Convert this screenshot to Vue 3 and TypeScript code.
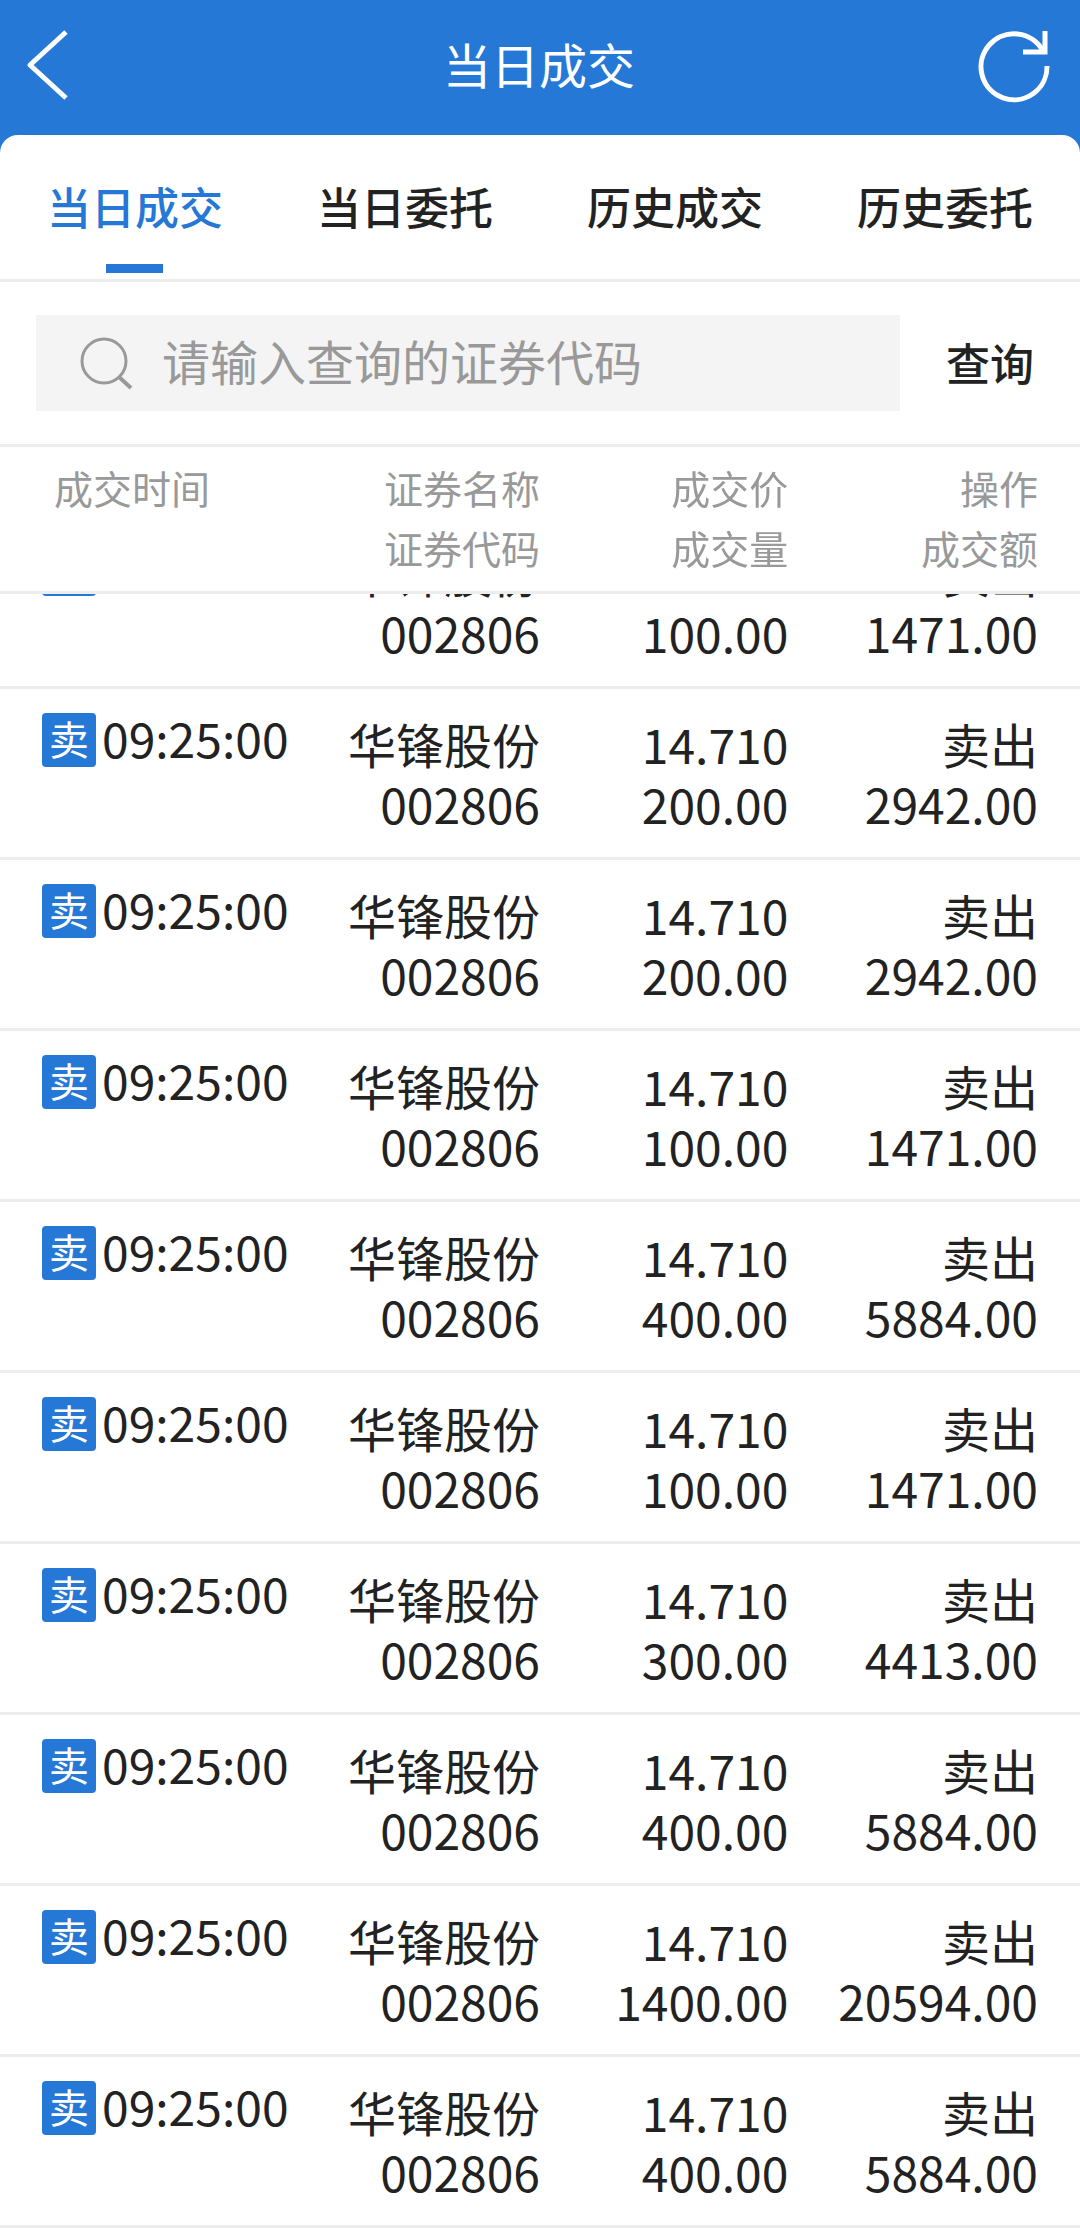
<script setup lang="ts">
import { nextTick, onMounted, ref } from 'vue'

interface Deal {
  time: string
  name: string
  code: string
  price: string
  volume: string
  amount: string
}

const tabs: string[] = ['当日成交', '当日委托', '历史成交', '历史委托']
const activeTab = ref<string>(tabs[0])
const keyword = ref<string>('')
const scroller = ref<HTMLElement | null>(null)

const fills: [string, string][] = [
  ['100.00', '1471.00'],
  ['200.00', '2942.00'],
  ['200.00', '2942.00'],
  ['100.00', '1471.00'],
  ['400.00', '5884.00'],
  ['100.00', '1471.00'],
  ['300.00', '4413.00'],
  ['400.00', '5884.00'],
  ['1400.00', '20594.00'],
  ['400.00', '5884.00'],
]

const deals: Deal[] = fills.map(([volume, amount]) => ({
  time: '09:25:00',
  name: '华锋股份',
  code: '002806',
  price: '14.710',
  volume,
  amount,
}))

// The list opens at its latest entry.
onMounted(async () => {
  await nextTick()
  if (scroller.value) scroller.value.scrollTop = scroller.value.scrollHeight
})
</script>

<template>
  <div class="page">
    <header class="bar">
      <button class="icon-button" type="button" aria-label="返回">
        <svg class="back" viewBox="0 0 44 72" fill="none" stroke="currentColor" stroke-width="5">
          <path d="M40 3 L4 36 L40 69" stroke-linejoin="round" />
        </svg>
      </button>
      <h1>当日成交</h1>
      <button class="icon-button" type="button" aria-label="刷新">
        <svg class="refresh" viewBox="0 0 76 76" fill="none" stroke="currentColor" stroke-width="5">
          <path d="M71 39 A33 33 0 1 1 67 24" />
          <path d="M69 4 V25 H47" />
        </svg>
      </button>
    </header>

    <main class="sheet">
      <nav class="tabs">
        <button
          v-for="tab in tabs"
          :key="tab"
          type="button"
          class="tab"
          :class="{ active: tab === activeTab }"
          @click="activeTab = tab"
        >
          {{ tab }}
        </button>
      </nav>

      <form class="search" @submit.prevent>
        <label class="field">
          <svg viewBox="0 0 54 54" fill="none" stroke="currentColor" stroke-width="3">
            <circle cx="25" cy="25" r="22" />
            <path d="M40 41 L52 52" stroke-width="4" />
          </svg>
          <input v-model="keyword" type="text" placeholder="请输入查询的证券代码" aria-label="证券代码" />
        </label>
        <button class="query" type="submit">查询</button>
      </form>

      <div ref="scroller" class="scroller">
        <table>
          <colgroup>
            <col class="col-time" />
            <col class="col-name" />
            <col class="col-price" />
            <col class="col-amount" />
          </colgroup>
          <thead>
            <tr>
              <th scope="col">成交时间</th>
              <th scope="col">证券名称<br />证券代码</th>
              <th scope="col">成交价<br />成交量</th>
              <th scope="col">操作<br />成交额</th>
            </tr>
          </thead>
          <tbody>
            <tr v-for="(deal, i) in deals" :key="i">
              <td>
                <div class="time"><span class="badge">卖</span>{{ deal.time }}</div>
              </td>
              <td>{{ deal.name }}<br />{{ deal.code }}</td>
              <td>{{ deal.price }}<br />{{ deal.volume }}</td>
              <td>卖出<br />{{ deal.amount }}</td>
            </tr>
          </tbody>
        </table>
      </div>
    </main>
  </div>
</template>

<style>
body {
  margin: 0;
  background: #fff;
}
</style>

<style scoped>
.page {
  display: flex;
  flex-direction: column;
  height: 100vh;
  background: #2578d5;
  color: #222;
  font-family: "Noto Sans CJK SC", "Noto Sans", sans-serif;
}

button,
input {
  padding: 0;
  border: 0;
  background: none;
  color: inherit;
  font: inherit;
}

.bar {
  display: flex;
  flex: none;
  align-items: center;
  justify-content: space-between;
  height: 135px;
  padding: 0 28px 6px 26px;
  box-sizing: border-box;
  color: #fff;
}

.bar h1 {
  margin: 0;
  padding-bottom: 4px;
  font-size: 48px;
  font-weight: 400;
  line-height: 60px;
}

.icon-button {
  display: flex;
  width: 76px;
  height: 76px;
  align-items: center;
}

.back {
  width: 44px;
  height: 72px;
}

.refresh {
  width: 76px;
  height: 76px;
}

.sheet {
  display: flex;
  flex: 1;
  flex-direction: column;
  min-height: 0;
  background: #fff;
  border-radius: 18px 18px 0 0;
}

.tabs {
  display: flex;
  flex: none;
  border-bottom: 3px solid #ededed;
}

.tab {
  position: relative;
  flex: 1;
  height: 144px;
  padding-bottom: 2px;
  font-size: 44px;
  font-weight: 500;
}

.tab.active {
  color: #2578d5;
}

.tab.active::after {
  position: absolute;
  bottom: 6px;
  left: 50%;
  width: 57px;
  height: 9px;
  margin-left: -29px;
  background: #2578d5;
  content: "";
}

.search {
  display: flex;
  flex: none;
  padding: 33px 0 33px 36px;
  border-bottom: 3px solid #ededed;
}

.field {
  display: flex;
  flex: 1;
  align-items: center;
  height: 96px;
  padding-left: 43px;
  background: #f4f4f4;
  color: #999;
}

.field svg {
  flex: none;
  width: 54px;
  height: 54px;
}

.field input {
  flex: 1;
  min-width: 0;
  height: 90px;
  margin-left: 29px;
  padding-bottom: 6px;
  color: #222;
  font-size: 48px;
  outline: none;
}

.field input::placeholder {
  color: #999;
  opacity: 1;
}

.query {
  width: 180px;
  padding-bottom: 2px;
  font-size: 44px;
  font-weight: 500;
}

.scroller {
  flex: 1;
  min-height: 0;
  overflow-y: auto;
  scrollbar-width: none;
}

table {
  width: 100%;
  border-spacing: 0;
  table-layout: fixed;
}

.col-time {
  width: 28%;
}

.col-name {
  width: 22%;
}

.col-price {
  width: 23%;
}

.col-amount {
  width: 27%;
}

th,
td {
  border-bottom: 3px solid #ededed;
  line-height: 60px;
  text-align: right;
  vertical-align: top;
  white-space: nowrap;
}

th {
  position: sticky;
  z-index: 1;
  top: 0;
  padding: 10px 0 14px;
  background: #fff;
  color: #999;
  font-size: 39px;
  font-weight: 400;
}

td {
  padding: 24px 0;
  font-size: 48px;
}

th:first-child {
  padding-left: 54px;
  text-align: left;
}

td:first-child {
  padding-left: 42px;
}

th:last-child,
td:last-child {
  padding-right: 42px;
}

.time {
  display: flex;
  gap: 6px;
  line-height: 48px;
}

.badge {
  width: 54px;
  height: 54px;
  border-radius: 4px;
  background: #2578d5;
  color: #fff;
  font-size: 40px;
  line-height: 50px;
  text-align: center;
}
</style>
